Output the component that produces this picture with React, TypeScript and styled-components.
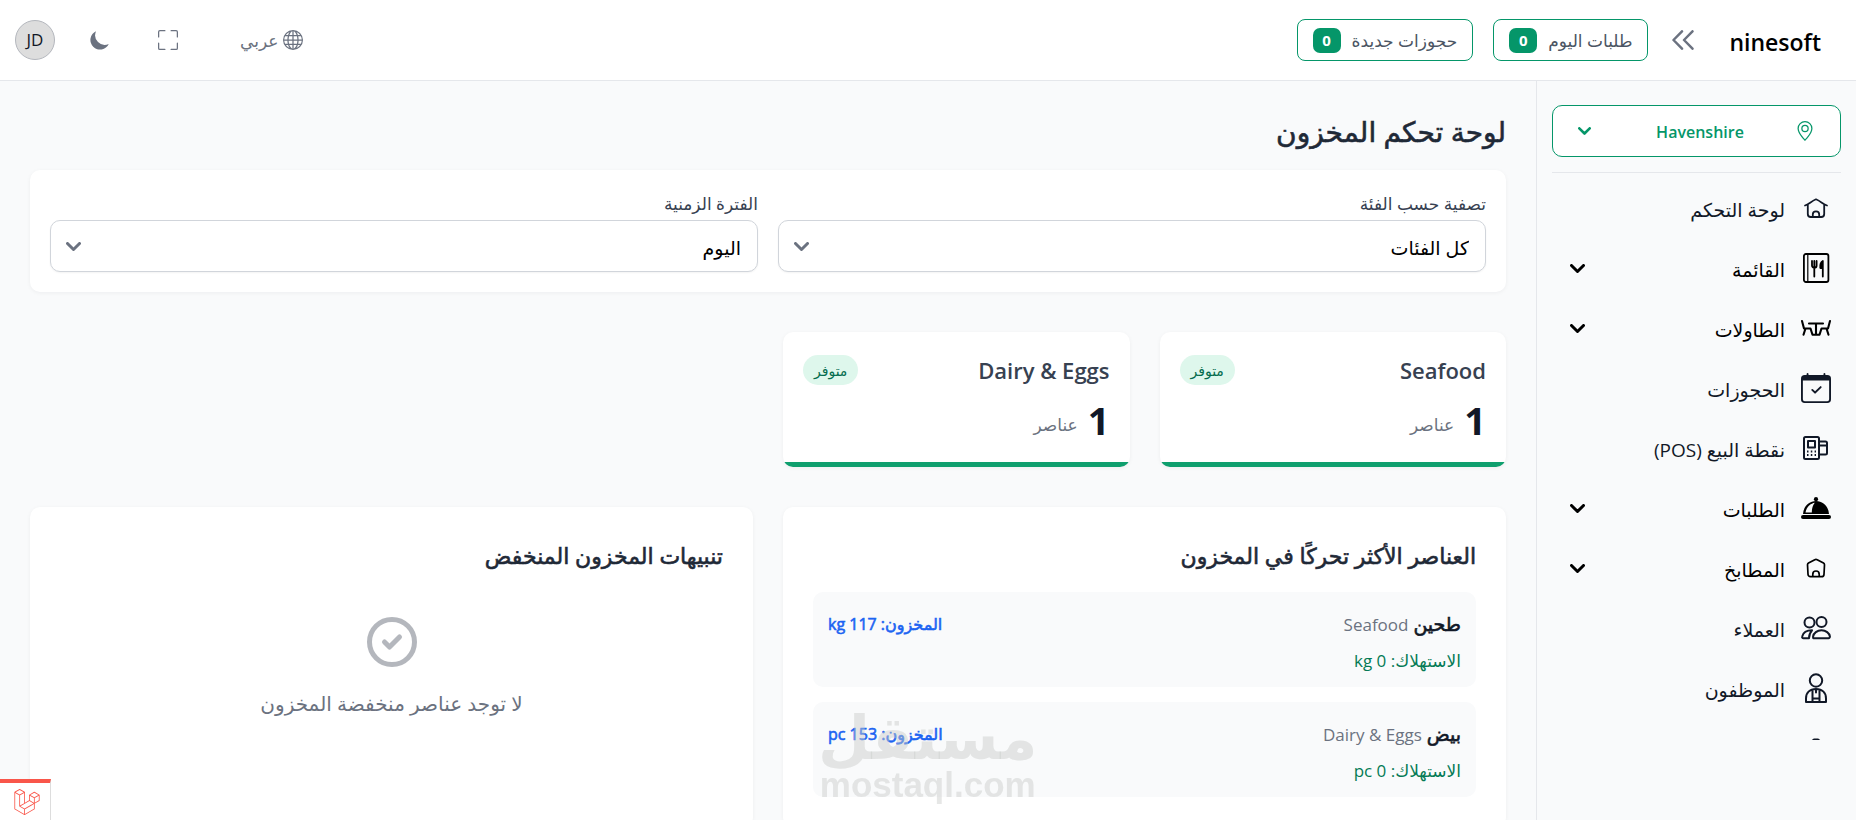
import React from "react";
import styled, { createGlobalStyle, css } from "styled-components";
import {
  BsCalendarCheck,
  BsFullscreen,
  BsGeoAlt,
  BsGlobe,
} from "react-icons/bs";
import { HiMoon } from "react-icons/hi";
import { SiLaravel } from "react-icons/si";

const GlobalStyle = createGlobalStyle`
  *, *::before, *::after { box-sizing: border-box; }
  body {
    margin: 0;
    background: #f9fafb;
    color: #111827;
    font-family: "Segoe UI", "Open Sans", "Noto Sans", "DejaVu Sans", sans-serif;
    font-size: 19px;
    line-height: 28px;
  }
  button, select { font: inherit; color: inherit; cursor: pointer; }
  h1, h2, h3, p, ul { margin: 0; padding: 0; }
  svg { display: block; flex-shrink: 0; }
`;

/* Semibold look for Arabic text, whose font has only regular and bold. */
const semibold = css`
  font-weight: 500;
  -webkit-text-stroke: 0.6px currentColor;
`;

const Shell = styled.div`
  display: flex;
  flex-direction: column;
  height: 100vh;
  overflow: hidden;
`;

const Header = styled.header`
  display: flex;
  align-items: center;
  justify-content: space-between;
  flex-shrink: 0;
  height: 81px;
  padding: 0 35px 0 15px;
  background: #fff;
  border-bottom: 1px solid #e5e7eb;
`;

const HeaderGroup = styled.div<{ $gap: number }>`
  display: flex;
  align-items: center;
  gap: ${(p) => p.$gap}px;
`;

const Brand = styled.a`
  padding-top: 3px;
  color: #000;
  font-size: 23px;
  font-weight: 600;
  text-decoration: none;
`;

const IconButton = styled.button`
  display: flex;
  align-items: center;
  gap: 5px;
  padding: 0;
  border: 0;
  background: none;
  color: #6b7280;
  font-size: 17px;
`;

const HeaderText = styled.span`
  padding-top: 2px;
`;

const Chip = styled.button`
  display: flex;
  align-items: center;
  gap: 11px;
  height: 42px;
  padding: 0 15px;
  border: 1px solid #059669;
  border-radius: 8px;
  background: #fff;
  color: #4b5563;
  font-size: 17px;
`;

const Count = styled.span`
  width: 28px;
  border-radius: 7px;
  background: #059669;
  color: #fff;
  font-size: 15px;
  font-weight: 700;
  line-height: 25px;
  text-align: center;
`;

const Avatar = styled.button`
  width: 40px;
  height: 40px;
  padding: 0;
  border: 1px solid #b4b7bd;
  border-radius: 50%;
  background: #ddd;
  color: #111827;
  font-size: 17px;
`;

const Body = styled.div`
  display: flex;
  flex: 1;
  min-height: 0;
`;

const Sidebar = styled.aside`
  display: flex;
  flex-direction: column;
  flex-shrink: 0;
  width: 320px;
  padding: 24px 15px 80px;
  border-left: 1px solid #e5e7eb;
`;

const BranchButton = styled.button`
  display: flex;
  align-items: center;
  flex-shrink: 0;
  height: 52px;
  padding: 0 25px;
  border: 1px solid #059669;
  border-radius: 10px;
  background: #fff;
  color: #059669;
  font-size: 16px;
  font-weight: 600;
`;

const BranchName = styled.span`
  flex: 1;
  padding: 2px 0 0 14px;
  text-align: center;
`;

const Nav = styled.nav`
  flex: 1;
  min-height: 0;
  margin-top: 15px;
  padding-top: 5px;
  border-top: 1px solid #e5e7eb;
  overflow-y: auto;
  scrollbar-width: none;
`;

const NavList = styled.ul`
  list-style: none;
`;

const NavLink = styled.a<{ $group?: boolean }>`
  display: flex;
  align-items: center;
  gap: 16px;
  height: 60px;
  padding: 0 10px 0 18px;
  color: ${(p) => (p.$group ? "#000" : "#111827")};
  text-decoration: none;
`;

const NavText = styled.span`
  flex: 1;
  padding-top: 4px;
`;

const Main = styled.main`
  flex: 1;
  min-width: 0;
  padding: 30px;
  overflow-y: auto;
  scrollbar-width: none;
`;

const PageTitle = styled.h1`
  ${semibold}
  color: #1f2937;
  font-size: 28px;
  line-height: 40px;
`;

const Card = styled.section`
  border-radius: 10px;
  background: #fff;
  box-shadow: 0 1px 4px rgba(17, 24, 39, 0.05);
`;

const Filters = styled(Card)`
  display: grid;
  grid-template-columns: 1fr 1fr;
  gap: 20px;
  margin-top: 19px;
  padding: 20px;
`;

const Field = styled.div`
  display: flex;
  flex-direction: column;
`;

const Label = styled.label`
  padding-bottom: 2px;
  color: #374151;
  font-size: 17px;
  line-height: 28px;
`;

const SelectBox = styled.div`
  display: grid;
  align-items: center;

  > * { grid-area: 1 / 1; }
  > svg { justify-self: end; margin-left: 16px; color: #6b7280; pointer-events: none; }
`;

const Select = styled.select`
  width: 100%;
  height: 52px;
  padding: 4px 16px 0;
  border: 1px solid #d1d5db;
  border-radius: 10px;
  background: #fff;
  box-shadow: 0 1px 2px rgba(0, 0, 0, 0.05);
  color: #000;
  appearance: none;
`;

const StatGrid = styled.div`
  display: grid;
  grid-template-columns: repeat(4, 1fr);
  gap: 30px;
  margin: 40px 0;
`;

const StatCard = styled(Card)`
  padding: 20px 20px 25px;
  background: linear-gradient(#0f9f6e, #0f9f6e) bottom / 100% 5px no-repeat #fff;
`;

const StatHead = styled.div`
  display: flex;
  align-items: center;
  justify-content: space-between;
`;

const StatTitle = styled.h3`
  color: #374151;
  font-size: 22px;
  font-weight: 600;
  line-height: 36px;
`;

const Badge = styled.span`
  padding: 2px 11px 0;
  border-radius: 15px;
  background: #def7ec;
  color: #046c4e;
  font-size: 14px;
  line-height: 28px;
`;

const StatValue = styled.p`
  display: flex;
  align-items: flex-end;
  gap: 10px;
  padding-top: 10px;
  font-size: 38px;
  font-weight: 700;
  line-height: 44px;
`;

const Unit = styled.span`
  color: #6b7280;
  font-size: 17px;
  font-weight: 400;
  line-height: 34px;
`;

const PanelGrid = styled.div`
  display: grid;
  grid-template-columns: 1fr 1fr;
  gap: 30px;
`;

const Panel = styled(Card)`
  padding: 30px;
`;

const PanelTitle = styled.h2`
  ${semibold}
  padding-bottom: 18px;
  color: #1f2937;
  font-size: 22px;
  line-height: 37px;
`;

const ItemList = styled.ul`
  display: flex;
  flex-direction: column;
  gap: 15px;
  list-style: none;
`;

const Item = styled.li`
  display: flex;
  justify-content: space-between;
  height: 95px;
  padding: 15px;
  border-radius: 10px;
  background: #f9fafb;
`;

const ItemLine = styled.p`
  line-height: 34px;
`;

const ItemName = styled.span`
  ${semibold}
`;

const ItemCategory = styled.span`
  color: #6b7280;
  font-size: 17px;
`;

const ItemUsage = styled.p`
  padding-top: 2px;
  color: #057a55;
  font-size: 17px;
  line-height: 34px;
`;

const ItemStock = styled.p`
  ${semibold}
  color: #1c64f2;
  font-size: 16px;
  line-height: 34px;
`;

const Empty = styled.div`
  display: flex;
  flex-direction: column;
  align-items: center;
  gap: 18px;
  padding: 20px 0;
  color: #6b7280;
  font-size: 20px;
`;

const DebugBar = styled.a`
  position: fixed;
  left: 0;
  bottom: 0;
  display: flex;
  align-items: center;
  justify-content: center;
  width: 51px;
  height: 41px;
  padding: 0 0 0 3px;
  border-top: 4px solid #f9564a;
  border-right: 1px solid #ddd;
  background: #fff;
  color: #f9564a;
`;

const Watermark = styled.div`
  position: fixed;
  left: 818px;
  bottom: 17px;
  display: flex;
  flex-direction: column;
  align-items: center;
  color: rgba(200, 202, 200, 0.45);
  font-family: "Liberation Sans", "DejaVu Sans", sans-serif;
  font-weight: 700;
  pointer-events: none;
`;

const WatermarkName = styled.span`
  font-family: "DejaVu Sans", sans-serif;
  font-size: 60px;
  line-height: 58px;
`;

const WatermarkSite = styled.span`
  font-size: 35px;
  line-height: 36px;
`;

const Chevron = ({ size = 15 }: { size?: number }) => (
  <svg width={size} height={size * 0.6} viewBox="0 0 10 6" fill="none" stroke="currentColor" strokeWidth="2" strokeLinecap="round" strokeLinejoin="round">
    <path d="M1 1l4 4 4-4" />
  </svg>
);

const DoubleChevron = () => (
  <svg width="22" height="20" viewBox="0 0 22 20" fill="none" stroke="currentColor" strokeWidth="2.500" strokeLinecap="round" strokeLinejoin="round">
    <path d="M10 1.300L1.500 10 10 18.700M20.500 1.300L12 10l8.500 8.700" />
  </svg>
);

const Line = ({ children, width = 1.8 }: { children: React.ReactNode; width?: number }) => (
  <svg width="30" height="30" viewBox="0 0 30 30" fill="none" stroke="currentColor" strokeWidth={width} strokeLinecap="round" strokeLinejoin="round">
    {children}
  </svg>
);

const HomeIcon = () => (
  <Line width={1.8}>
    <path d="M4 12.500C8 11 10 8.500 15 6.300c5 2.200 7 4.700 11 6.200M6.800 11.500v9.500a3 3 0 0 0 3 3h10.400a3 3 0 0 0 3-3v-9.500M11.800 24v-2.500a3.200 3.200 0 0 1 6.400 0V24" />
  </Line>
);

const MenuBookIcon = () => (
  <Line>
    <rect x="2.900" y="1" width="24.500" height="28" rx="2" />
    <path d="M6.800 1.500v27" strokeWidth="1.200" />
    <path d="M11 8v4.500a2.300 2.300 0 0 0 4.600 0V8M13.300 8v15.500" />
    <path d="M21.800 23.500V8c-2 1-2.800 4-2.500 7h2.500" fill="currentColor" />
  </Line>
);

const TablesIcon = () => (
  <Line width={2.1}>
    <path d="M8 10.500h14M15 10.500v11M12.500 21.700h5M1 8l2 7.500h6.500l2 6.200M4.500 15.500L2.500 21.700M29 8l-2 7.500h-6.500l-2 6.200M25.500 15.500l2 6.200" />
  </Line>
);

const PosIcon = () => (
  <Line width={2}>
    <rect x="3" y="4" width="15" height="22" rx="1.500" />
    <rect x="7" y="8" width="7" height="6.500" />
    <path d="M18 8.500h6.500a1.500 1.500 0 0 1 1.500 1.500v10a1.500 1.500 0 0 1-1.500 1.500H18M18 12.500h8" />
    <path d="M6 18.500h1.500M9.800 18.500h1.500M13.600 18.500H15M6 22h1.500M9.800 22h1.500M13.600 22H15" strokeLinecap="butt" />
  </Line>
);

const ClocheIcon = () => (
  <svg width="30" height="30" viewBox="0 0 30 30" fill="currentColor">
    <rect x="0" y="22" width="30" height="4" rx="2" />
    <circle cx="15" cy="6.200" r="2.100" />
    <path fillRule="evenodd" d="M2 21C2.500 13.500 8 8 15 8s12.500 5.500 13 13zM4.500 19.500h6.300c0-4 1-7.500 3-9.800C9 10.500 5.200 14.500 4.500 19.500z" />
  </svg>
);

const KitchenIcon = () => (
  <Line width={1.7}>
    <path d="M6.500 11.800a2 2 0 0 1 1-1.700l6.300-3.400a2.500 2.500 0 0 1 2.400 0l6.300 3.400a2 2 0 0 1 1 1.700l-.5 9.400a2.500 2.500 0 0 1-2.500 2.500H9.500A2.500 2.500 0 0 1 7 21.200zM11.800 23.700v-2.500a3.200 3.200 0 0 1 6.400 0v2.500" />
  </Line>
);

const CustomersIcon = () => (
  <Line width={2}>
    <circle cx="8.500" cy="9.500" r="5" />
    <circle cx="20.500" cy="9" r="5" />
    <path d="M12.300 25.200h15.200a1.500 1.500 0 0 0 1.400-1.700c-.5-3.500-4-6.200-8.400-6.200s-7.900 2.700-8.400 6.200c-.1.900-.1 1.200.2 1.700zM11 17.300c-5 0-8.800 2.200-9.800 6.200-.3 1 .2 1.700 1.300 1.700H8c0-3 .8-5.400 3-7.900z" />
  </Line>
);

const StaffIcon = () => (
  <Line width={2}>
    <circle cx="15" cy="7.500" r="6.200" />
    <path d="M5 29v-3.500C5 20 8.500 16 15 16s10 4 10 9.500V29zM11.500 16.500V29M18.500 16.500V29M11.500 25.500h7M15 16v3.500" />
  </Line>
);

const DeliveryIcon = () => (
  <Line width={2}>
    <path d="M13 6.500h4l8 6.500v12H5V13z" />
  </Line>
);

const CheckCircle = () => (
  <svg width="60" height="60" viewBox="0 0 24 24" fill="none" stroke="#b4b7bd" strokeWidth="2" strokeLinecap="round" strokeLinejoin="round">
    <path d="M9 12l2 2 4-4" />
    <circle cx="12" cy="12" r="9" />
  </svg>
);

const navItems: { text?: string; icon: React.ReactNode; group?: boolean }[] = [
  { text: "لوحة التحكم", icon: <HomeIcon /> },
  { text: "القائمة", icon: <MenuBookIcon />, group: true },
  { text: "الطاولات", icon: <TablesIcon />, group: true },
  { text: "الحجوزات", icon: <BsCalendarCheck size={30} /> },
  { text: "نقطة البيع (POS)", icon: <PosIcon /> },
  { text: "الطلبات", icon: <ClocheIcon />, group: true },
  { text: "المطابخ", icon: <KitchenIcon />, group: true },
  { text: "العملاء", icon: <CustomersIcon /> },
  { text: "الموظفون", icon: <StaffIcon /> },
  { icon: <DeliveryIcon /> },
];

const stats = [
  { title: "Seafood", value: 1 },
  { title: "Dairy & Eggs", value: 1 },
];

const items = [
  { name: "طحين", category: "Seafood", used: "0 kg", stock: "117 kg" },
  { name: "بيض", category: "Dairy & Eggs", used: "0 pc", stock: "153 pc" },
];

const filters = [
  { id: "category", label: "تصفية حسب الفئة", value: "كل الفئات" },
  { id: "period", label: "الفترة الزمنية", value: "اليوم" },
];

export default function App() {
  return (
    <Shell dir="rtl" lang="ar">
      <GlobalStyle />
      <Header>
        <HeaderGroup $gap={24}>
          <HeaderGroup $gap={35}>
            <Brand href="#">ninesoft</Brand>
            <IconButton aria-label="طي القائمة"><DoubleChevron /></IconButton>
          </HeaderGroup>
          <HeaderGroup $gap={20}>
            <Chip><HeaderText>طلبات اليوم</HeaderText><Count>0</Count></Chip>
            <Chip><HeaderText>حجوزات جديدة</HeaderText><Count>0</Count></Chip>
          </HeaderGroup>
        </HeaderGroup>
        <HeaderGroup $gap={33}>
          <HeaderGroup $gap={46}>
            <HeaderGroup $gap={62}>
              <IconButton><BsGlobe size={20} /><HeaderText>عربي</HeaderText></IconButton>
              <IconButton aria-label="ملء الشاشة"><BsFullscreen size={20} /></IconButton>
            </HeaderGroup>
            <IconButton aria-label="الوضع الليلي"><HiMoon size={24} /></IconButton>
          </HeaderGroup>
          <Avatar>JD</Avatar>
        </HeaderGroup>
      </Header>
      <Body>
        <Sidebar>
          <BranchButton>
            <BsGeoAlt size={20} />
            <BranchName>Havenshire</BranchName>
            <Chevron size={13} />
          </BranchButton>
          <Nav>
            <NavList>
              {navItems.map((item, i) => (
                <li key={i}>
                  <NavLink href="#" $group={item.group}>
                    {item.icon}
                    {item.text && <NavText>{item.text}</NavText>}
                    {item.group && <Chevron />}
                  </NavLink>
                </li>
              ))}
            </NavList>
          </Nav>
        </Sidebar>
        <Main>
          <PageTitle>لوحة تحكم المخزون</PageTitle>
          <Filters>
            {filters.map((f) => (
              <Field key={f.id}>
                <Label htmlFor={f.id}>{f.label}</Label>
                <SelectBox>
                  <Select id={f.id}>
                    <option>{f.value}</option>
                  </Select>
                  <Chevron />
                </SelectBox>
              </Field>
            ))}
          </Filters>
          <StatGrid>
            {stats.map((s) => (
              <StatCard key={s.title}>
                <StatHead>
                  <StatTitle>{s.title}</StatTitle>
                  <Badge>متوفر</Badge>
                </StatHead>
                <StatValue>{s.value}<Unit>عناصر</Unit></StatValue>
              </StatCard>
            ))}
          </StatGrid>
          <PanelGrid>
            <Panel>
              <PanelTitle>العناصر الأكثر تحركًا في المخزون</PanelTitle>
              <ItemList>
                {items.map((item) => (
                  <Item key={item.name}>
                    <div>
                      <ItemLine>
                        <ItemName>{item.name}</ItemName> <ItemCategory>{item.category}</ItemCategory>
                      </ItemLine>
                      <ItemUsage>الاستهلاك: {item.used}</ItemUsage>
                    </div>
                    <ItemStock>المخزون: {item.stock}</ItemStock>
                  </Item>
                ))}
              </ItemList>
            </Panel>
            <Panel>
              <PanelTitle>تنبيهات المخزون المنخفض</PanelTitle>
              <Empty>
                <CheckCircle />
                <p>لا توجد عناصر منخفضة المخزون</p>
              </Empty>
            </Panel>
          </PanelGrid>
        </Main>
      </Body>
      <DebugBar href="#" aria-label="Laravel"><SiLaravel size={26} /></DebugBar>
      <Watermark dir="ltr">
        <WatermarkName>مستقل</WatermarkName>
        <WatermarkSite>mostaql.com</WatermarkSite>
      </Watermark>
    </Shell>
  );
}
